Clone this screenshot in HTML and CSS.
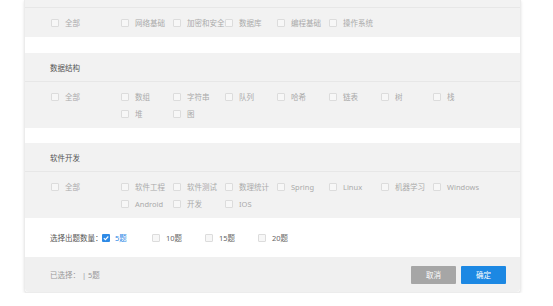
FILE: index.html
```html
<!DOCTYPE html>
<html lang="zh-CN">

<head>
    <meta charset="UTF-8">
    <meta name="viewport" content="width=device-width, initial-scale=1.0">
    <title>选择题目</title>
    <link rel="stylesheet" href="styles.css">
</head>

<body>
    <div class="panel">
        <!-- 计算机基础 (标题在上方已滚出) -->
        <div class="section first">
            <div class="section-head"></div>
            <div class="opts">
                <label class="opt all"><span class="box"></span>全部</label>
                <div class="list">
                    <label class="opt"><span class="box"></span>网络基础</label>
                    <label class="opt"><span class="box"></span>加密和安全</label>
                    <label class="opt"><span class="box"></span>数据库</label>
                    <label class="opt"><span class="box"></span>编程基础</label>
                    <label class="opt"><span class="box"></span>操作系统</label>
                </div>
            </div>
        </div>

        <!-- 数据结构 -->
        <div class="section">
            <div class="section-head">数据结构</div>
            <div class="opts">
                <label class="opt all"><span class="box"></span>全部</label>
                <div class="list">
                    <label class="opt"><span class="box"></span>数组</label>
                    <label class="opt"><span class="box"></span>字符串</label>
                    <label class="opt"><span class="box"></span>队列</label>
                    <label class="opt"><span class="box"></span>哈希</label>
                    <label class="opt"><span class="box"></span>链表</label>
                    <label class="opt"><span class="box"></span>树</label>
                    <label class="opt"><span class="box"></span>栈</label>
                    <label class="opt"><span class="box"></span>堆</label>
                    <label class="opt"><span class="box"></span>图</label>
                </div>
            </div>
        </div>

        <!-- 软件开发 -->
        <div class="section last">
            <div class="section-head">软件开发</div>
            <div class="opts">
                <label class="opt all"><span class="box"></span>全部</label>
                <div class="list">
                    <label class="opt"><span class="box"></span>软件工程</label>
                    <label class="opt"><span class="box"></span>软件测试</label>
                    <label class="opt"><span class="box"></span>数理统计</label>
                    <label class="opt"><span class="box"></span>Spring</label>
                    <label class="opt"><span class="box"></span>Linux</label>
                    <label class="opt"><span class="box"></span>机器学习</label>
                    <label class="opt"><span class="box"></span>Windows</label>
                    <label class="opt"><span class="box"></span>Android</label>
                    <label class="opt"><span class="box"></span>开发</label>
                    <label class="opt"><span class="box"></span>IOS</label>
                </div>
            </div>
        </div>

        <!-- 出题数量 -->
        <div class="count">
            <span class="count-label">选择出题数量：</span>
            <div class="count-list">
                <label class="opt checked"><span class="box">
                        <svg viewBox="0 0 8 8" width="8" height="8">
                            <path d="M1.8 4.1 L3.4 5.6 L6.3 2.5" fill="none" stroke="#fff" stroke-width="1.1" />
                        </svg>
                    </span>5题</label>
                <label class="opt dark"><span class="box"></span>10题</label>
                <label class="opt dark"><span class="box"></span>15题</label>
                <label class="opt dark"><span class="box"></span>20题</label>
            </div>
        </div>

        <!-- 底部 -->
        <div class="footer">
            <span class="summary">已选择： | 5题</span>
            <div class="actions">
                <button class="btn cancel">取消</button>
                <button class="btn ok">确定</button>
            </div>
        </div>
    </div>
</body>

</html>
```

FILE: styles.css
```css
body {
    margin: 0;
    background: #fff;
    font-family: "Noto Sans", "Noto Sans CJK SC", sans-serif;
    font-size: 7.5px;
}

.panel {
    width: 495px;
    margin-left: 24px;
    border: 1px solid #ececec;
    border-top: none;
    border-radius: 0 0 4px 4px;
    box-shadow: 0 1px 3px rgba(0, 0, 0, 0.12);
    background: #fff;
}

.section {
    background: #f2f2f2;
    margin-bottom: 15px;
}

.section.first {
    margin-bottom: 16px;
}

.section.last {
    margin-bottom: 0;
}

.section-head {
    height: 28px;
    line-height: 30px;
    padding-left: 25px;
    color: #555;
    border-bottom: 1px solid #e7e7e7;
}

.section.first .section-head {
    height: 7px;
}

.opts {
    display: flex;
    padding: 6px 0 6px 26px;
}

.opt {
    display: flex;
    align-items: center;
    height: 17px;
    color: #aaa;
    white-space: nowrap;
}

.opt .box {
    display: inline-flex;
    align-items: center;
    justify-content: center;
    width: 6px;
    height: 6px;
    margin-right: 6px;
    border: 1px solid #dcdcdc;
    border-radius: 1px;
    background: #f7f7f7;
}

.opt.all {
    width: 70px;
    align-self: flex-start;
}

.list {
    display: grid;
    grid-template-columns: repeat(7, 52px);
}

.count {
    display: flex;
    align-items: center;
    height: 39px;
    padding-left: 25px;
    color: #555;
}

.count-label {
    width: 52px;
    white-space: nowrap;
}

.count-list {
    display: grid;
    grid-template-columns: 50px 53px 53px 53px;
}

.opt.dark {
    color: #666;
}

.opt.checked {
    color: #2e8ae6;
}

.opt.checked .box {
    width: 8px;
    height: 8px;
    border: none;
    background: #2e8ae6;
    margin-right: 5px;
}

.footer {
    display: flex;
    align-items: center;
    justify-content: space-between;
    height: 35px;
    padding: 0 14px 0 25px;
    background: #f0f0f0;
    border-radius: 0 0 4px 4px;
}

.summary {
    color: #999;
}

.actions {
    display: flex;
    gap: 5px;
}

.btn {
    width: 45px;
    height: 18px;
    border: none;
    border-radius: 1px;
    font-family: inherit;
    font-size: 7.5px;
    color: #fff;
    cursor: pointer;
}

.btn.cancel {
    background: #a6a6a6;
}

.btn.ok {
    background: #1c88e3;
}
```
